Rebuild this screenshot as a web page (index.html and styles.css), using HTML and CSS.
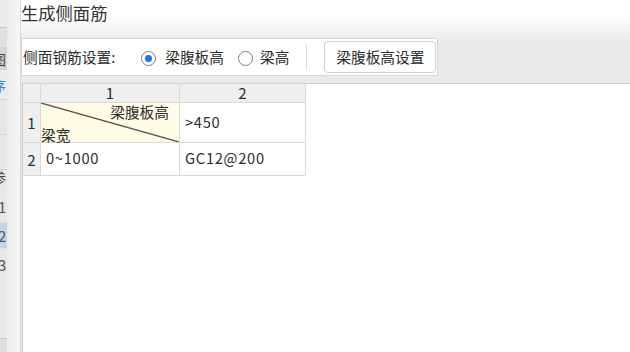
FILE: index.html
```html
<!DOCTYPE html>
<html lang="zh-CN">
<head>
<meta charset="utf-8">
<title>生成侧面筋</title>
<link rel="stylesheet" href="styles.css">
</head>
<body>
<div class="app-col">
  <div class="ac ac-top"></div>
  <div class="ac ac-2"></div>
  <div class="ac ac-3"><span class="frag">图</span></div>
  <div class="ac ac-4"><span class="frag blue">序</span></div>
  <div class="ac ac-5"></div>
  <div class="ac ac-6"></div>
  <div class="ac ac-7"><span class="frag">参</span></div>
  <div class="ac ac-num"><span class="num">1</span></div>
  <div class="ac ac-num sel"><span class="num">2</span></div>
  <div class="ac ac-num"><span class="num">3</span></div>
  <div class="ac ac-rest"></div>
  <div class="ac ac-bot"></div>
</div>
<div class="edge"></div>
<div class="dialog">
  <div class="title">生成侧面筋</div>
  <div class="group">
    <span class="label">侧面钢筋设置:</span>
    <span class="radio checked"><span class="dot"></span></span>
    <span class="rtext">梁腹板高</span>
    <span class="radio r2"></span>
    <span class="rtext">梁高</span>
    <span class="sep"></span>
    <button class="btn">梁腹板高设置</button>
  </div>
  <div class="gridwrap">
    <div class="grid">
      <div class="c hd corner"></div>
      <div class="c hd">1</div>
      <div class="c hd">2</div>
      <div class="c rh">1</div>
      <div class="c diag">
        <svg class="diagline" viewBox="0 0 100 100" preserveAspectRatio="none"><line x1="0" y1="0" x2="100" y2="100" stroke="#555" stroke-width="1.3" vector-effect="non-scaling-stroke"/></svg>
        <span class="dtop">梁腹板高</span>
        <span class="dbot">梁宽</span>
      </div>
      <div class="c val">&gt;450</div>
      <div class="c rh">2</div>
      <div class="c val">0~1000</div>
      <div class="c val">GC12@200</div>
    </div>
  </div>
</div>
</body>
</html>
```
FILE: styles.css
```css
html, body {
  margin: 0;
  padding: 0;
}
body {
  width: 630px;
  height: 352px;
  overflow: hidden;
  display: flex;
  font-family: "Noto Sans CJK SC", "Noto Sans", sans-serif;
  color: #2b2b2b;
  background: #fff;
}
.app-col {
  width: 7px;
  flex: none;
  display: flex;
  flex-direction: column;
  overflow: hidden;
  background: #e3e3e3;
  font-size: 14px;
  color: #444;
}
.ac {
  flex: none;
  overflow: hidden;
  white-space: nowrap;
  box-sizing: border-box;
}
.ac-top { height: 28px; background: #ececec; border-bottom: 1px solid #c6c6c6; }
.ac-2 { height: 20px; background: #e0e0e0; border-bottom: 1px solid #cfcfcf; }
.ac-3 { height: 22px; background: #d6d6d6; line-height: 22px; }
.ac-4 { height: 30px; background: #e9edf2; line-height: 30px; border-bottom: 1px solid #cfcfcf; }
.ac-5 { height: 35px; background: #e6e6e6; border-bottom: 1px solid #d2d2d2; }
.ac-6 { height: 35px; background: #e6e6e6; border-bottom: 1px solid #d2d2d2; }
.ac-7 { height: 22px; background: #e6e6e6; line-height: 14px; }
.ac-num { height: 29px; line-height: 29px; background: #e8e8e8; }
.ac-num.sel { background: #c4d4ea; height: 25px; line-height: 25px; margin: 2px 0; }
.ac-rest { height: 60px; background: #e8e8e8; border-bottom: 1px solid #c9c9c9; }
.ac-bot { flex: 1; background: #dedede; }
.frag { display: inline-block; margin-left: -8px; }
.frag.blue { color: #3f7fd0; }
.num { display: inline-block; margin-left: -2px; font-size: 15px; color: #555; }

.edge {
  width: 13px;
  flex: none;
  background: linear-gradient(to right, #ececec, #f7f7f7);
  border-right: 1px solid #d8d8d8;
}

.dialog {
  flex: 1;
  display: flex;
  flex-direction: column;
  background: linear-gradient(to bottom, #ffffff 0, #ffffff 16px, #f3f3f3 30px, #eaeaea 42px, #e9e9e9 100%);
  min-width: 0;
}
.title {
  height: 38px;
  box-sizing: border-box;
  padding-top: 1px;
  font-size: 17.3px;
  line-height: 24px;
  color: #333;
}
.group {
  width: 417px;
  height: 38px;
  box-sizing: border-box;
  border: 1px solid #d6d6d6;
  background: #fff;
  display: flex;
  align-items: center;
  font-size: 14.7px;
  color: #2d2d2d;
}
.label {
  margin-left: 1px;
  line-height: 20px;
}
.radio {
  width: 15px;
  height: 15px;
  box-sizing: border-box;
  border: 1px solid #7d7d7d;
  border-radius: 50%;
  background: #fff;
  display: flex;
  align-items: center;
  justify-content: center;
  margin-left: 26px;
  margin-top: 2px;
  flex: none;
}
.radio .dot {
  width: 7px;
  height: 7px;
  border-radius: 50%;
  background: #1f73e0;
}
.radio.r2 {
  margin-left: 14px;
}
.rtext {
  margin-left: 9px;
  line-height: 20px;
}
.r2 + .rtext {
  margin-left: 7px;
}
.sep {
  width: 1px;
  height: 26px;
  background: #dedede;
  margin-left: 17px;
}
.btn {
  margin-left: 17px;
  width: 112px;
  height: 32px;
  border: 1px solid #cfcfcf;
  border-radius: 4px;
  background: #fff;
  font-family: inherit;
  font-size: 14.7px;
  color: #2d2d2d;
  padding: 0;
  line-height: 20px;
}
.gridwrap {
  margin-top: 7px;
  margin-left: 1px;
  flex: 1;
  background: #fff;
  border-top: 1px solid #d2d2d2;
  border-left: 1px solid #cdcdcd;
}
.grid {
  display: grid;
  grid-template-columns: 18px 139px 126px;
  grid-template-rows: 19px 40px 33px;
  font-size: 14.7px;
  color: #2d2d2d;
}
.c {
  box-sizing: border-box;
  border-right: 1px solid #d9d9d9;
  border-bottom: 1px solid #d9d9d9;
  display: flex;
  align-items: center;
  min-width: 0;
  white-space: nowrap;
}
.hd {
  background: #efefef;
  justify-content: center;
  line-height: 18px;
  font-size: 15px;
}
.rh {
  background: #efefef;
  justify-content: center;
  font-size: 15px;
}
.val {
  padding-left: 5px;
  padding-bottom: 3px;
  letter-spacing: 0.7px;
}
.diag {
  position: relative;
  background: #fffbe4;
  flex-direction: column;
  align-items: stretch;
  justify-content: space-between;
}
.diagline {
  position: absolute;
  left: 0;
  top: 0;
  width: 100%;
  height: 100%;
}
.dtop {
  text-align: right;
  padding-right: 10px;
  line-height: 18px;
}
.dbot {
  text-align: left;
  line-height: 14px;
}
```
